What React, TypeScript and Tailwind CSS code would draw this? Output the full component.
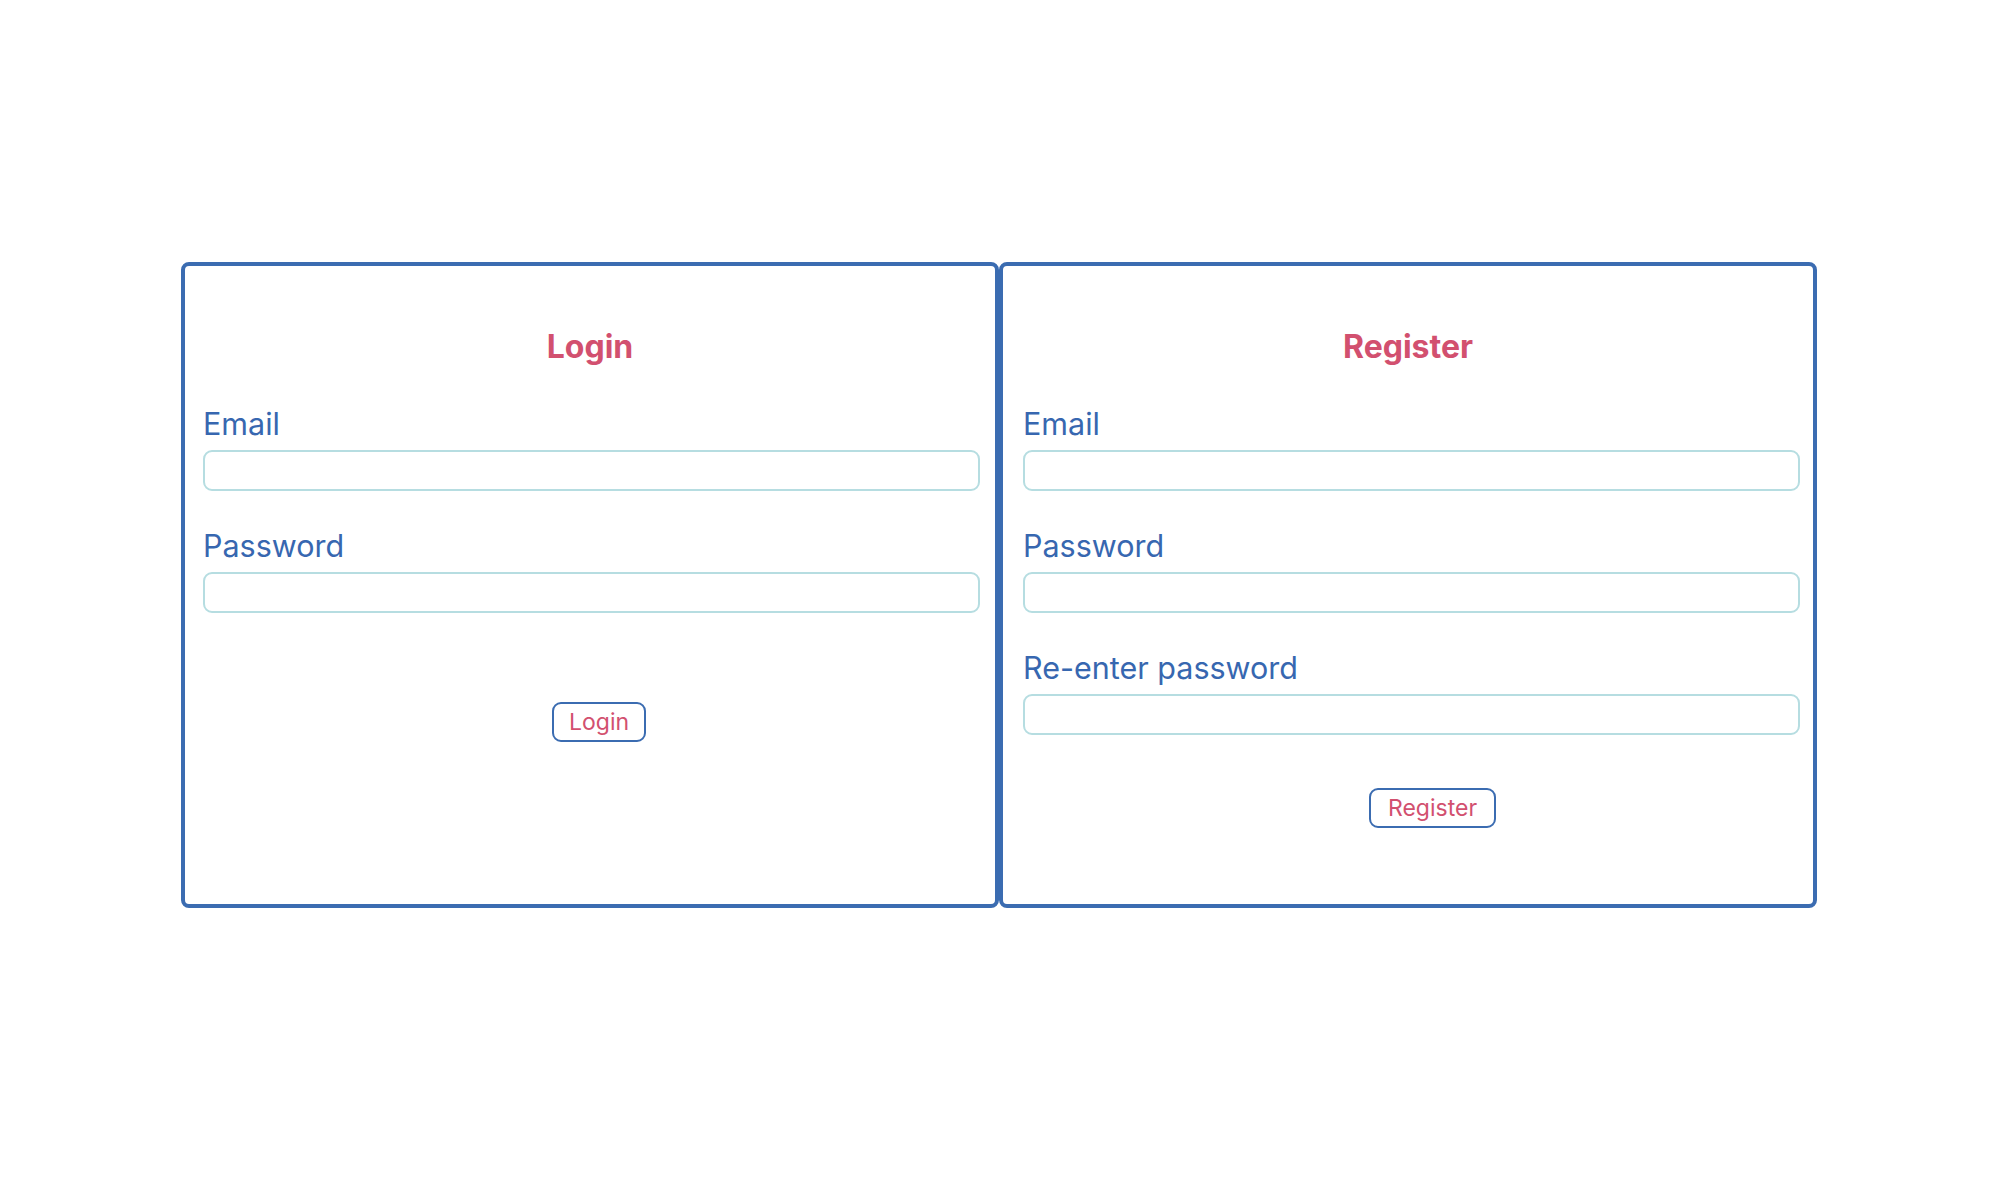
import React from "react";

const font = { fontFamily: "Inter, 'Noto Sans', sans-serif" };

function Field({ label }: { label: string }) {
  return (
    <div className="flex flex-col mb-[40px]">
      <label className="text-[30.5px] leading-[30px] text-[#3767b0] font-normal">{label}</label>
      <input
        type="text"
        className="mt-[11px] w-[777px] h-[41px] border-2 border-[#b6dde1] rounded-[9px] bg-white outline-none"
      />
    </div>
  );
}

export default function App() {
  return (
    <div className="min-h-screen bg-white" style={font}>
      <div className="flex flex-row pt-[262px] pl-[181px]">
        <div className="w-[818px] h-[646px] border-4 border-[#3b6cb1] rounded-[8px] pl-[18px] pt-[65px]">
          <h2 className="w-[810px] ml-[-18px] text-[32px] leading-[32px] font-bold text-[#d2506f] text-center">
            Login
          </h2>
          <div className="mt-[46px]">
            <Field label="Email" />
            <Field label="Password" />
          </div>
          <button className="mt-[49px] ml-[349px] h-[40px] px-[15px] border-2 border-[#3b6cb1] rounded-[9px] text-[23px] leading-none text-[#d2506f] bg-white">
            Login
          </button>
        </div>
        <div className="w-[818px] h-[646px] border-4 border-[#3b6cb1] rounded-[8px] pl-[20px] pt-[65px]">
          <h2 className="w-[810px] ml-[-20px] text-[32px] leading-[32px] font-bold text-[#d2506f] text-center">
            Register
          </h2>
          <div className="mt-[46px]">
            <Field label="Email" />
            <Field label="Password" />
            <Field label="Re-enter password" />
          </div>
          <button className="mt-[13px] ml-[346px] h-[40px] px-[17px] border-2 border-[#3b6cb1] rounded-[9px] text-[23px] leading-none text-[#d2506f] bg-white">
            Register
          </button>
        </div>
      </div>
    </div>
  );
}
